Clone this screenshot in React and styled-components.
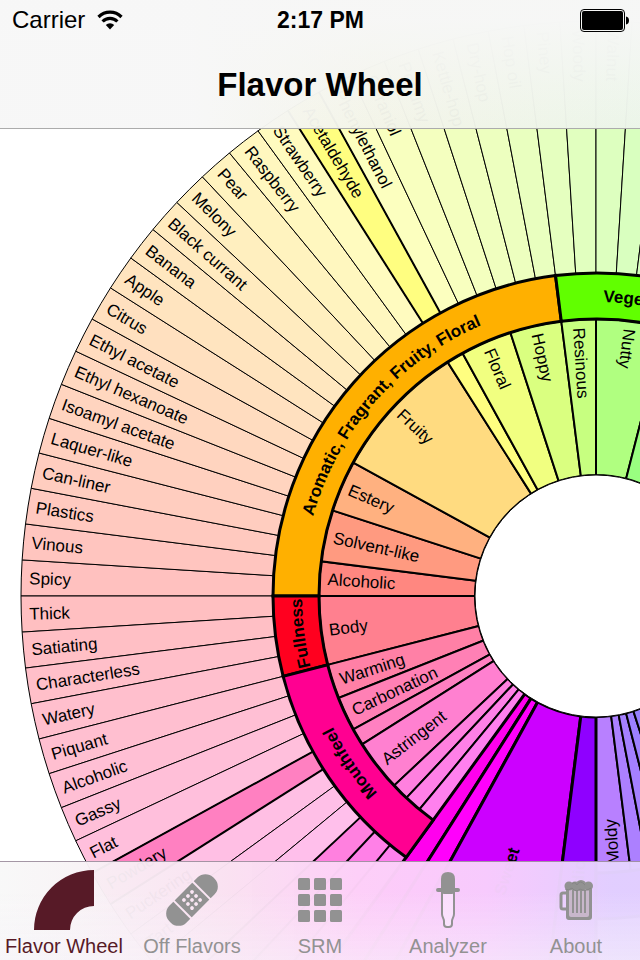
import React from "react";
import styled, { createGlobalStyle, css } from "styled-components";

const GlobalStyle = createGlobalStyle`
  * { box-sizing: border-box; }
  body {
    margin: 0;
    background: #fff;
    color: #000;
    font-family: "Liberation Sans", Arial, Helvetica, sans-serif;
  }
`;

const Screen = styled.div`
  position: relative;
  display: flex;
  flex-direction: column;
  justify-content: space-between;
  min-height: 100vh;
  overflow: hidden;
`;

const WheelLayer = styled.main`
  position: absolute;
  inset: 0;
`;

const WheelSvg = styled.svg`
  display: block;
  width: 100%;
  height: 100%;
  font-size: 17px;
`;

const barBase = css`
  position: relative;
  z-index: 1;
`;

const Header = styled.header`
  ${barBase}
  border-bottom: 1px solid #acacac;
  background:
    linear-gradient(to bottom, rgba(247, 247, 247, 0.9) 15%, rgba(247, 247, 247, 0) 100%),
    linear-gradient(to right, rgba(247, 247, 247, 0.97) 30%, rgba(243, 244, 233, 0.97) 58%, rgba(236, 245, 234, 0.97) 100%);
`;

const StatusBar = styled.div`
  display: grid;
  grid-template-columns: 1fr auto 1fr;
  align-items: center;
  height: 40px;
  padding: 0 11px 0 12px;
`;

const Carrier = styled.div`
  display: flex;
  align-items: center;
  gap: 12px;
  font-size: 24px;
`;

const Clock = styled.time`
  font-size: 23px;
  font-weight: 700;
`;

const BatterySlot = styled.div`
  display: flex;
  justify-content: flex-end;
`;

const Title = styled.h1`
  display: flex;
  align-items: center;
  justify-content: center;
  height: 88px;
  margin: 0;
  padding-top: 2px;
  font-size: 33px;
  font-weight: 700;
`;

const TabBar = styled.nav`
  ${barBase}
  display: grid;
  grid-template-columns: repeat(5, 1fr);
  height: 99px;
  border-top: 1px solid rgba(120, 100, 120, 0.65);
  background:
    linear-gradient(to bottom, rgba(255, 255, 255, 0) 30%, rgba(247, 244, 250, 0.5) 100%),
    linear-gradient(to right, rgba(248, 248, 248, 0.97) 0%, rgba(248, 244, 246, 0.97) 10%, rgba(250, 226, 242, 0.97) 36%, rgba(253, 208, 248, 0.98) 56%, rgba(248, 206, 253, 0.98) 76%, rgba(228, 210, 255, 0.98) 96%);
`;

const Tab = styled.button`
  display: flex;
  flex-direction: column;
  align-items: center;
  justify-content: space-between;
  padding: 5px 0 2px;
  border: 0;
  background: none;
  color: ${(p) => (p.$active ? "#571a27" : "#929292")};
  font: inherit;
  font-size: 20px;
  line-height: 24px;
  white-space: nowrap;
  cursor: pointer;
`;

const TabIcon = styled.svg`
  width: 64px;
  height: 66px;
`;

const CX = 596;
const CY = 596;
const R_HOLE = 121;
const R_INNER = 277;
const R_RING = 323;
const R_OUTER = 575;
const STEP = 3.6;

// Angles are measured clockwise from nine o'clock, in degrees.
const point = (r, a) => {
  const t = (a * Math.PI) / 180;
  return [CX - r * Math.cos(t), CY - r * Math.sin(t)].map((n) => n.toFixed(2)).join(" ");
};

const sectorPath = (r0, r1, a0, a1) =>
  `M${point(r0, a0)}L${point(r1, a0)}A${r1} ${r1} 0 0 1 ${point(r1, a1)}L${point(r0, a1)}A${r0} ${r0} 0 0 0 ${point(r0, a0)}Z`;

const hue = (from, to, light) => {
  const mid = ((from + to) / 2) * STEP;
  return `hsl(${(mid + 360) % 360} 100% ${light}%)`;
};

// Outer flavours in order, clockwise and counter-clockwise from nine o'clock.
const upper = [
  "Spicy", "Vinous", "Plastics", "Can-liner", "Laquer-like", "Isoamyl acetate",
  "Ethyl hexanoate", "Ethyl acetate", "Citrus", "Apple", "Banana", "Black currant",
  "Melony", "Pear", "Raspberry", "Strawberry", "Acetaldehyde", "Phenylethanol",
  "Geraniol", "Perfumy", "Kettle-hop", "Dry-hop", "Hop oil", "Piney", "Woody",
  "Walnut", "", "", "",
];
const lower = [
  "Thick", "Satiating", "Characterless", "Watery", "Piquant", "Alcoholic",
  "Gassy", "Flat", "Powdery", "Puckering", "Tart", "", "", "", "",
];
const strong = new Set([16, -9, -13, -14, -15]);

const outer = [
  ...upper.map((label, i) => ({ label, at: i })),
  ...lower.map((label, i) => ({ label, at: -i - 1 })),
];

const inner = [
  { from: 0, to: 2, label: "Alcoholic" },
  { from: 2, to: 5, label: "Solvent-like" },
  { from: 5, to: 8, label: "Estery" },
  { from: 8, to: 16, label: "Fruity" },
  { from: 16, to: 17 },
  { from: 17, to: 20, label: "Floral" },
  { from: 20, to: 23, label: "Hoppy" },
  { from: 23, to: 25, label: "Resinous" },
  { from: 25, to: 29, label: "Nutty" },
  { from: 29, to: 31 },
  { from: -4, to: 0, label: "Body" },
  { from: -6, to: -4, label: "Warming" },
  { from: -8, to: -6, label: "Carbonation" },
  { from: -9, to: -8 },
  { from: -12, to: -9, label: "Astringent" },
  { from: -13, to: -12 },
  { from: -14, to: -13 },
  { from: -15, to: -14 },
  { from: -27, to: -25, label: "Moldy" },
  { from: -28, to: -27 },
  { from: -29, to: -28 },
  { from: -30, to: -29 },
  { from: -31, to: -30 },
];

const rings = [
  { id: "aromatic", from: 0, to: 23, label: "Aromatic, Fragrant, Fruity, Floral" },
  { id: "vegetal", from: 23, to: 31, label: "Vegetal" },
  { id: "fullness", from: -4, to: 0, label: "Fullness" },
  { id: "mouthfeel", from: -15, to: -4, label: "Mouthfeel" },
  { id: "stale", from: -31, to: -25 },
];

const tastes = [
  { from: -16, to: -15 },
  { from: -17, to: -16 },
  { from: -23, to: -17, label: "Sweet" },
  { from: -25, to: -23, label: "Acidic" },
];

function RadialLabel({ from, to, r, bold, end, children }) {
  const a = ((from + to) / 2) * STEP;
  return (
    <text
      transform={`translate(${CX} ${CY}) rotate(${a.toFixed(1)})`}
      x={-r}
      y={6}
      textAnchor={end ? "end" : "start"}
      fontWeight={bold ? 700 : 400}
    >
      {children}
    </text>
  );
}

function FlavorWheel() {
  return (
    <WheelSvg viewBox="0 0 640 960" preserveAspectRatio="xMinYMin slice" role="img" aria-label="Beer flavor wheel">
      <g stroke="#000" strokeWidth="1">
        {outer.map(({ at }) => (
          <path
            key={at}
            d={sectorPath(R_RING, R_OUTER, at * STEP, (at + 1) * STEP)}
            fill={hue(at, at + 1, strong.has(at) ? 75 : 87.5)}
          />
        ))}
      </g>
      <g stroke="#000" strokeWidth="2">
        {[16, 17, -8, -9, -12, -13, -14, -15].map((at) => (
          <path key={at} d={`M${point(R_RING, at * STEP)}L${point(R_OUTER, at * STEP)}`} />
        ))}
      </g>
      <g stroke="#000" strokeWidth="2">
        {inner.map(({ from, to }) => (
          <path key={from} d={sectorPath(R_HOLE, R_INNER, from * STEP, to * STEP)} fill={hue(from, to, 75)} />
        ))}
      </g>
      <g stroke="#000" strokeWidth="3">
        {tastes.map(({ from, to }) => (
          <path key={from} d={sectorPath(R_HOLE, R_OUTER, from * STEP, to * STEP)} fill={hue(from, to, 50)} />
        ))}
      </g>
      <g stroke="#000" strokeWidth="3">
        {rings.map(({ id, from, to }) => (
          <path key={id} d={sectorPath(R_INNER, R_RING, from * STEP, to * STEP)} fill={hue(from, to, 50)} />
        ))}
      </g>
      <circle cx={CX} cy={CY} r={R_HOLE} fill="#fff" stroke="#000" />
      {outer.filter((s) => s.label).map(({ label, at }) => (
        <RadialLabel key={at} from={at} to={at + 1} r={567}>{label}</RadialLabel>
      ))}
      {inner.filter((s) => s.label).map(({ label, from, to }) => (
        <RadialLabel key={label} from={from} to={to} r={269}>{label}</RadialLabel>
      ))}
      {tastes.filter((s) => s.label).map(({ label, from, to }) => (
        <RadialLabel key={label} from={from} to={to} r={265} bold end>{label}</RadialLabel>
      ))}
      {rings.filter((s) => s.label).map(({ id, from, to, label }) => (
        <g key={id}>
          <path id={id} d={`M${point(294, from * STEP)}A294 294 0 0 1 ${point(294, to * STEP)}`} fill="none" />
          <text fontWeight="700" textAnchor="middle">
            <textPath href={`#${id}`} startOffset="50%">{label}</textPath>
          </text>
        </g>
      ))}
    </WheelSvg>
  );
}

const WifiIcon = () => (
  <svg width="26" height="20" viewBox="0 0 26 20" aria-hidden="true">
    <g fill="none" stroke="#000" strokeWidth="3.200">
      <path d="M1.500 7a16.200 16.200 0 0 1 23 0" />
      <path d="M5.600 11.500a10.400 10.400 0 0 1 14.800 0" />
    </g>
    <path d="M13 19.500l-4.200-4.500a6 6 0 0 1 8.400 0Z" />
  </svg>
);

const BatteryIcon = () => (
  <svg width="49" height="23" viewBox="0 0 49 23" role="img" aria-label="Battery full">
    <rect x="0.5" y="0.5" width="44" height="22" rx="3.5" fill="none" stroke="#000" />
    <rect x="2" y="2" width="41" height="19" rx="2" />
    <path d="M46 7.500c2 .4 3 1.800 3 4s-1 3.600-3 4Z" />
  </svg>
);

const WheelIcon = () => (
  <TabIcon viewBox="0 0 64 66" aria-hidden="true">
    <path d="M2 63A60 60 0 0 1 62 3V39A24 24 0 0 0 38 63Z" fill="currentColor" />
  </TabIcon>
);

const BandageIcon = () => (
  <TabIcon viewBox="0 0 64 66" aria-hidden="true">
    <g transform="translate(32 33) rotate(-45)">
      <rect x="-31" y="-12" width="62" height="24" rx="11" fill="currentColor" />
      <g fill="#fbe6f4">
        <rect x="-14.500" y="-13" width="2" height="26" />
        <rect x="12.500" y="-13" width="2" height="26" />
        {[-5.700, 0, 5.700].map((y) => [-5.700, 0, 5.700].map((x) => (
          <circle key={`${x},${y}`} cx={x} cy={y} r="1.900" />
        )))}
      </g>
    </g>
  </TabIcon>
);

const GridIcon = () => (
  <TabIcon viewBox="0 0 64 66" aria-hidden="true">
    {[11, 27, 43].map((y) => [10, 26, 42].map((x) => (
      <rect key={`${x},${y}`} x={x} y={y} width="12" height="12" rx="1.500" fill="currentColor" />
    )))}
  </TabIcon>
);

const DropperIcon = () => (
  <TabIcon viewBox="0 0 64 66" aria-hidden="true">
    <path
      d="M26 24V47C26 50 28 52 28 54V57Q28 60 31 60H33Q36 60 36 57V54C36 52 38 50 38 47V24"
      fill="rgba(255,255,255,.35)"
      stroke="currentColor"
      strokeWidth="2"
    />
    <path d="M25 21V12Q25 5 32 5T39 12V21H42Q44 21 44 23T42 25H39Q38 27 36 27H28Q26 27 25 25H22Q20 25 20 23T22 21Z" fill="currentColor" />
  </TabIcon>
);

const BeerIcon = () => (
  <TabIcon viewBox="0 0 64 66" aria-hidden="true">
    <path d="M24 26H19Q17 26 17 28V40Q17 42 19 42H24" fill="none" stroke="currentColor" strokeWidth="3" />
    <path d="M22 20H48V50Q48 53 45 53H25Q22 53 22 50Z" fill="currentColor" />
    <path d="M25 22H45V48Q45 50 43 50H27Q25 50 25 48Z" fill="#c8b7cb" />
    <g stroke="currentColor" strokeWidth="2">
      <path d="M29 23V46M33 23V46M37 23V46M41 23V46" />
    </g>
    <g fill="currentColor">
      <circle cx="25" cy="19" r="4.500" />
      <circle cx="31" cy="19" r="4.500" />
      <circle cx="37" cy="18.500" r="5.500" />
      <circle cx="44.500" cy="19" r="4.500" />
    </g>
    <g fill="none" stroke="#868686">
      <path d="M21 22Q25 24 28 21Q32 26 36 22Q41 25 47 21M28 17Q31 14 33 18Q36 12 41 18" />
    </g>
  </TabIcon>
);

const tabs = [
  { label: "Flavor Wheel", Icon: WheelIcon, active: true },
  { label: "Off Flavors", Icon: BandageIcon },
  { label: "SRM", Icon: GridIcon },
  { label: "Analyzer", Icon: DropperIcon },
  { label: "About", Icon: BeerIcon },
];

export default function App() {
  return (
    <Screen>
      <GlobalStyle />
      <WheelLayer>
        <FlavorWheel />
      </WheelLayer>
      <Header>
        <StatusBar>
          <Carrier>
            Carrier
            <WifiIcon />
          </Carrier>
          <Clock>2:17 PM</Clock>
          <BatterySlot>
            <BatteryIcon />
          </BatterySlot>
        </StatusBar>
        <Title>Flavor Wheel</Title>
      </Header>
      <TabBar aria-label="Sections">
        {tabs.map(({ label, Icon, active }) => (
          <Tab key={label} type="button" $active={active} aria-current={active ? "page" : undefined}>
            <Icon />
            {label}
          </Tab>
        ))}
      </TabBar>
    </Screen>
  );
}
